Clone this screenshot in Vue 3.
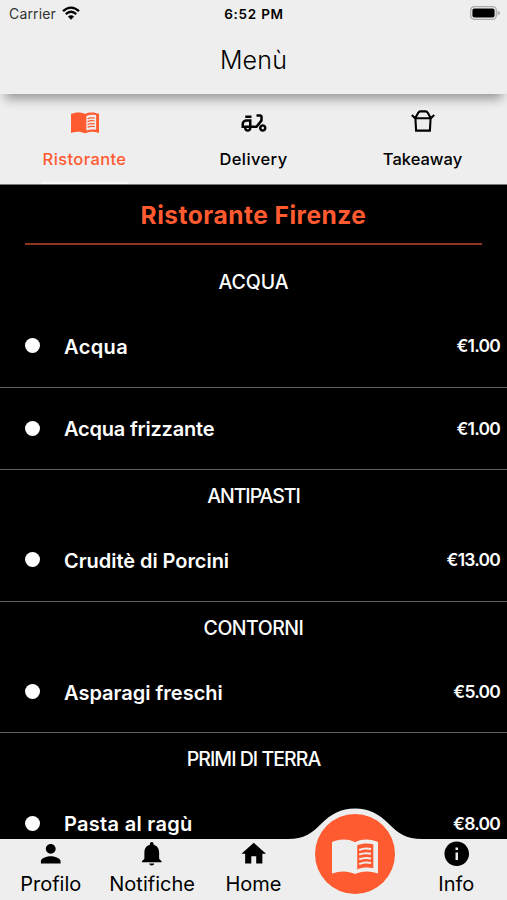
<script setup>
import { ref } from 'vue'

const activeTab = ref('ristorante')

const tabs = [
  { id: 'ristorante', label: 'Ristorante' },
  { id: 'delivery', label: 'Delivery' },
  { id: 'takeaway', label: 'Takeaway' }
]

// tracking: letter spacing in px
const sections = [
  {
    name: 'ACQUA',
    tracking: -0.1,
    items: [
      { name: 'Acqua', price: '€1.00', tracking: 0.4 },
      { name: 'Acqua frizzante', price: '€1.00', tracking: -0.2 }
    ]
  },
  {
    name: 'ANTIPASTI',
    tracking: -1.05,
    items: [{ name: 'Cruditè di Porcini', price: '€13.00', tracking: -0.05 }]
  },
  {
    name: 'CONTORNI',
    tracking: -0.5,
    items: [{ name: 'Asparagi freschi', price: '€5.00', tracking: 0 }]
  },
  {
    name: 'PRIMI DI TERRA',
    tracking: -0.95,
    items: [{ name: 'Pasta al ragù', price: '€8.00', tracking: 0.3 }]
  }
]

const navItems = [
  {
    label: 'Profilo',
    icon: 'M12 12c2.21 0 4-1.79 4-4s-1.79-4-4-4-4 1.79-4 4 1.79 4 4 4zm0 2c-2.67 0-8 1.34-8 4v2h16v-2c0-2.66-5.33-4-8-4z'
  },
  {
    label: 'Notifiche',
    icon: 'M12 21.6c1.1 0 2-.7 2-1.6h-4c0 .9.89 1.6 2 1.6zm6-5.6v-5c0-3.07-1.64-5.64-4.5-6.32V4c0-.83-.67-1.5-1.5-1.5s-1.5.67-1.5 1.5v.68C7.63 5.36 6 7.92 6 11v5l-2 2v1h16v-1l-2-2z'
  },
  { label: 'Home', icon: 'M10 20v-6h4v6h5v-8h3L12 3 2 12h3v8z' },
  { label: '', icon: '' },
  {
    label: 'Info',
    icon: 'M12 2C6.48 2 2 6.48 2 12s4.48 10 10 10 10-4.48 10-10S17.52 2 12 2zm1 15h-2v-6h2v6zm0-8h-2V7h2v2z'
  }
]

const bookPages =
  'M0 3C6 .4 15-.9 23 3.2C31-.9 40 .4 46 3V34.6C38 31.6 30 31.6 23 35C16 31.6 8 31.6 0 34.6ZM25.2 6.3V30.4C30 28.3 36 28 41.3 29.2V5.2C36 3.8 30 4.2 25.2 6.3Z'
const bookLines =
  'M27.2 11C31 9.3 35 9.2 39 10M27.2 15.7C31 14 35 13.9 39 14.7M27.2 20.4C31 18.7 35 18.6 39 19.4M27.2 25.1C31 23.4 35 23.3 39 24.1'
</script>

<template>
  <div class="screen">
    <header class="header">
      <div class="status">
        <div class="carrier">
          <span>Carrier</span>
          <svg class="wifi" viewBox="0 0 18 14">
            <path d="M1 5.2Q9-2 17 5.2" />
            <path d="M3.8 8.1Q9 3.4 14.2 8.1" />
            <path class="solid" d="M9 13.8 5.9 10.5Q9 8 12.1 10.5Z" />
          </svg>
        </div>
        <span class="time">6:52 PM</span>
        <div class="battery-box">
          <svg class="battery" viewBox="0 0 30 14">
            <rect x=".7" y=".7" width="25.6" height="12.6" rx="3.6" />
            <rect class="level" x="2.4" y="2.4" width="22.2" height="9.2" rx="2" />
            <path class="cap" d="M27.7 4.6Q30 5.2 30 7T27.7 9.4Z" />
          </svg>
        </div>
      </div>
      <h1 class="title">Menù</h1>
    </header>

    <div class="tabs">
      <button
        v-for="tab in tabs"
        :key="tab.id"
        class="tab"
        :class="[tab.id, { active: activeTab === tab.id }]"
        @click="activeTab = tab.id"
      >
        <svg v-if="tab.id === 'ristorante'" class="book" viewBox="0 0 46 36">
          <path fill-rule="evenodd" :d="bookPages" />
          <path class="lines" :d="bookLines" />
        </svg>
        <svg v-else-if="tab.id === 'delivery'" class="scooter" viewBox="0 0 24 24">
          <path d="M19 7c0-1.1-.9-2-2-2h-3v2h3v2.65L13.52 14H10V9H6c-2.21 0-4 1.79-4 4v3h2c0 1.66 1.34 3 3 3s3-1.34 3-3h4.48L19 10.35V7zM4 14v-1c0-1.1.9-2 2-2h2v3H4zm3 3c-.55 0-1-.45-1-1h2c0 .55-.45 1-1 1zM5 6h5v2H5zM19 13c-1.66 0-3 1.34-3 3s1.34 3 3 3 3-1.34 3-3-1.34-3-3-3zm0 4c-.55 0-1-.45-1-1s.45-1 1-1 1 .45 1 1-.45 1-1 1z" />
        </svg>
        <svg v-else class="takeaway-box" viewBox="0 0 24 22">
          <path d="M.8 5 4.1 8.2H19.9L23.2 5M4.6 7.6 7.4 2.6Q7.9 1.4 9.4 1.4H14.6Q16.1 1.4 16.6 2.6L19.4 7.6M4.4 8.2 5.1 20.6H18.9L19.6 8.2" />
        </svg>
        <span class="tab-label">{{ tab.label }}</span>
      </button>
    </div>

    <main class="menu">
      <h2 class="restaurant">Ristorante Firenze</h2>
      <section v-for="section in sections" :key="section.name">
        <h3 class="section-name" :style="{ letterSpacing: section.tracking + 'px' }">
          {{ section.name }}
        </h3>
        <div v-for="item in section.items" :key="item.name" class="item">
          <i class="dot"></i>
          <span class="item-name" :style="{ letterSpacing: item.tracking + 'px' }">{{ item.name }}</span>
          <span class="price">{{ item.price }}</span>
        </div>
      </section>
    </main>

    <nav class="nav">
      <svg class="bump" viewBox="0 0 134 32">
        <path d="M0 31C16 31 24 25 33 16C43 6 53 .5 67 .5S91 6 101 16C110 25 118 31 134 31V32H0Z" />
      </svg>
      <div v-for="(item, i) in navItems" :key="i" class="nav-item">
        <template v-if="item.label">
          <svg viewBox="0 0 24 24"><path :d="item.icon" /></svg>
          <span>{{ item.label }}</span>
        </template>
      </div>
      <button class="menu-button">
        <svg class="book" viewBox="0 0 46 36">
          <path fill-rule="evenodd" :d="bookPages" />
          <path class="lines" :d="bookLines" />
        </svg>
      </button>
    </nav>
  </div>
</template>

<style>
body {
  margin: 0;
  background: #000;
}
</style>

<style scoped>
.screen {
  position: relative;
  display: flex;
  flex-direction: column;
  width: 507px;
  height: 900px;
  overflow: hidden;
  background: #000;
  color: #000;
  font-family: Inter, 'Liberation Sans', sans-serif;
}

button {
  padding: 0;
  border: 0;
  background: none;
  font: inherit;
  color: inherit;
}

.header {
  position: relative;
  z-index: 1;
  height: 94px;
  flex: none;
  background: #eee;
  box-shadow: 0 10px 10px -5px rgba(0, 0, 0, 0.36);
}

.status {
  display: grid;
  grid-template-columns: 1fr auto 1fr;
  align-items: center;
  height: 27px;
  padding: 0 7px 0 9px;
  font-size: 14px;
}

.carrier {
  display: flex;
  align-items: center;
  gap: 6px;
  color: #333;
  letter-spacing: 0.15px;
}

.wifi {
  width: 18px;
  height: 14px;
  margin-top: -2px;
  fill: none;
  stroke: #000;
  stroke-width: 2.3;
}

.wifi .solid {
  fill: #000;
  stroke: none;
}

.time {
  margin-left: -1px;
  font-size: 13.5px;
  font-weight: 600;
  letter-spacing: 0.75px;
}

.battery-box {
  display: flex;
  justify-content: flex-end;
}

.battery {
  width: 30px;
  height: 14px;
  margin-top: -1px;
  fill: #eee;
  stroke: #aaa;
  stroke-width: 1.3;
}

.battery .level {
  fill: #000;
  stroke: none;
}

.battery .cap {
  fill: #aaa;
  stroke: none;
}

.title {
  margin: 0;
  line-height: 66px;
  text-align: center;
  font-size: 25px;
  font-weight: 300;
  letter-spacing: 0.2px;
}

.tabs {
  display: flex;
  box-sizing: border-box;
  height: 91px;
  flex: none;
  border-bottom: 1px solid #777;
  background: #eee;
}

.tab {
  position: relative;
  display: flex;
  flex: 1;
  flex-direction: column;
  align-items: center;
  font-size: 16.5px;
  font-weight: 500;
  letter-spacing: 0.4px;
}

.tab.takeaway {
  letter-spacing: 0;
}

.tab svg {
  height: 30px;
  margin-top: 14px;
}

.tab-label {
  margin-top: 11px;
  line-height: 20px;
}

.tab.active {
  color: #ff5a30;
}

.tab.active::after {
  content: '';
  position: absolute;
  bottom: 0;
  width: 87px;
  height: 2px;
  background: #fafafa;
}

.book {
  width: 28px;
  fill: currentColor;
}

.book .lines {
  fill: none;
  stroke: currentColor;
  stroke-width: 2;
}

.scooter {
  width: 30px;
}

.tab .takeaway-box {
  width: 24px;
  height: 22px;
  margin: 16px 0 6px;
  fill: none;
  stroke: #000;
  stroke-width: 2.1;
}

.menu {
  flex: 1;
  min-height: 0;
  overflow: hidden;
  color: #fff;
}

.restaurant {
  height: 57.5px;
  margin: 0 25px 11.5px;
  border-bottom: 2px solid #90361f;
  line-height: 61px;
  text-align: center;
  color: #ff5a30;
  font-size: 24.5px;
  font-weight: 700;
  letter-spacing: 0.5px;
}

.section-name {
  margin: 0;
  height: 49px;
  line-height: 52px;
  text-align: center;
  font-size: 19.5px;
  font-weight: 500;
}

.item {
  display: flex;
  align-items: center;
  box-sizing: border-box;
  height: 82.6px;
  padding: 0 7px 0 25px;
  border-bottom: 1.5px solid #606060;
}

.dot {
  width: 15px;
  height: 15px;
  border-radius: 50%;
  background: #fff;
}

.item-name {
  flex: 1;
  margin-left: 24px;
  padding-top: 2px;
  font-size: 20px;
  font-weight: 600;
}

.price {
  font-size: 17.5px;
  font-weight: 600;
  letter-spacing: -0.8px;
}

.nav {
  position: absolute;
  left: 0;
  right: 0;
  bottom: 0;
  display: flex;
  height: 61px;
  background: #eee;
}

.bump {
  position: absolute;
  left: 288px;
  top: -31px;
  width: 134px;
  height: 32px;
  fill: #eee;
}

.nav-item {
  display: flex;
  flex: 1;
  flex-direction: column;
  align-items: center;
  font-size: 20px;
}

.nav-item svg {
  width: 29.5px;
  height: 29.5px;
}

.nav-item span {
  line-height: 30px;
}

.menu-button {
  position: absolute;
  left: 315px;
  top: -25px;
  display: flex;
  align-items: center;
  justify-content: center;
  width: 80px;
  height: 80px;
  border-radius: 50%;
  background: #ff5a30;
  color: #eee;
}

.menu-button .book {
  width: 46px;
  height: 36px;
  margin-top: 5px;
}
</style>
